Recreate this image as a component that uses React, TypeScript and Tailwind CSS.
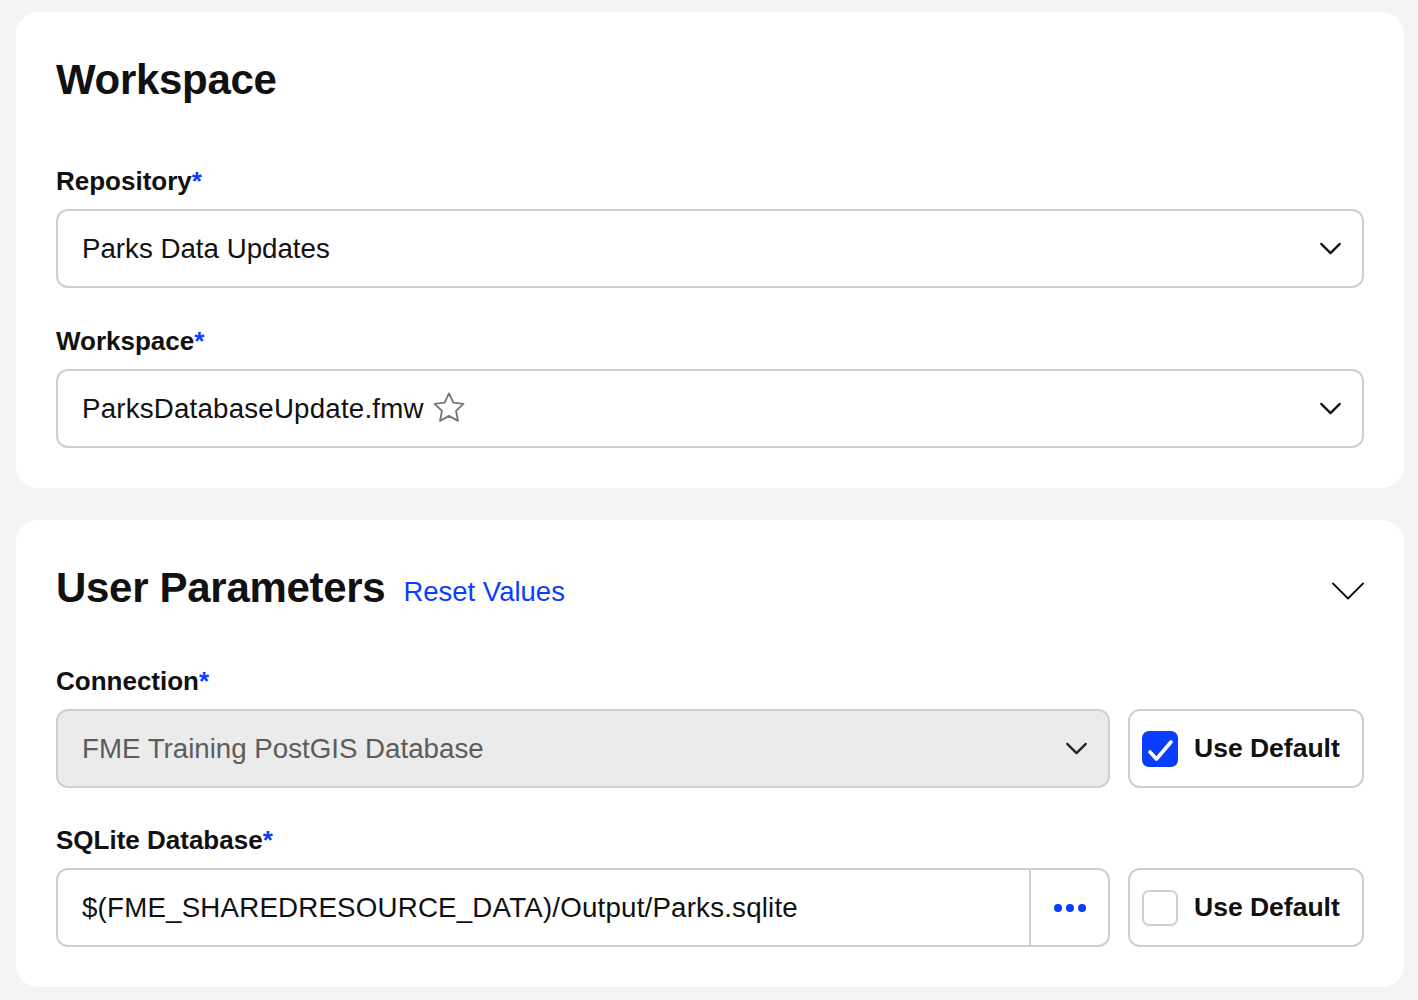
import React from "react";

const Chevron = ({ className = "" }: { className?: string }) => (
  <svg viewBox="0 0 24 14" className={className} fill="none" stroke="currentColor" strokeWidth={2.4} strokeLinecap="round" strokeLinejoin="round">
    <path d="M2 2l10 10L22 2" />
  </svg>
);

const Star = () => (
  <svg viewBox="0 0 24 24" className="h-[38px] w-[38px] text-[#777]" fill="none" stroke="currentColor" strokeWidth={1.2} strokeLinejoin="round">
    <path d="M12 2.8l2.75 5.8 6.35.8-4.65 4.4 1.2 6.3L12 17l-5.65 3.1 1.2-6.3L2.9 9.4l6.35-.8z" />
  </svg>
);

const Label = ({ children }: { children: React.ReactNode }) => (
  <div className="text-[26px] leading-8 font-bold text-[#111]">
    {children}
    <span className="text-[#0a3dff]">*</span>
  </div>
);

const SelectBox = ({
  children,
  disabled = false,
  className = "",
}: {
  children: React.ReactNode;
  disabled?: boolean;
  className?: string;
}) => (
  <div
    className={`flex h-[79px] items-center justify-between rounded-[12px] border-2 border-[#cfcfcf] pl-6 pr-5 ${
      disabled ? "bg-[#ebebeb] text-[#5c5c5c]" : "bg-white text-[#111]"
    } ${className}`}
  >
    <div className="flex items-center gap-[6px] text-[27.7px]">{children}</div>
    <Chevron className={`h-[13px] w-[23px] ${disabled ? "text-[#222]" : "text-[#111]"}`} />
  </div>
);

const UseDefault = ({ checked }: { checked: boolean }) => (
  <div className="flex h-[79px] w-[236px] shrink-0 items-center gap-4 rounded-[12px] border-2 border-[#cfcfcf] bg-white pl-3">
    {checked ? (
      <div className="flex h-9 w-9 items-center justify-center rounded-[7px] bg-[#0a3dff]">
        <svg viewBox="0 0 36 36" className="h-9 w-9" fill="none" stroke="white" strokeWidth={3.6} strokeLinecap="round" strokeLinejoin="round">
          <path d="M8 21l6.5 7L29 11" />
        </svg>
      </div>
    ) : (
      <div className="h-9 w-9 rounded-[7px] border-2 border-[#cfcfcf] bg-white" />
    )}
    <span className="text-[26.5px] font-bold text-[#111]">Use Default</span>
  </div>
);

export default function App() {
  return (
    <div className="min-h-screen bg-[#f4f4f4] pt-3 pb-3 pl-4 pr-[14px] font-['Liberation_Sans',Arial,sans-serif] text-[#111]">
      <div className="flex flex-col gap-8">
        {/* Workspace card */}
        <section className="rounded-[22px] bg-white px-10 pt-10 pb-10">
          <h1 className="text-[42px] leading-[56px] font-bold tracking-[-0.3px]">Workspace</h1>
          <div className="mt-[57px] flex flex-col gap-3">
            <Label>Repository</Label>
            <SelectBox>Parks Data Updates</SelectBox>
          </div>
          <div className="mt-[37px] flex flex-col gap-3">
            <Label>Workspace</Label>
            <SelectBox>
              <span className="tracking-[0.2px]">ParksDatabaseUpdate.fmw</span>
              <Star />
            </SelectBox>
          </div>
        </section>

        {/* User parameters card */}
        <section className="rounded-[22px] bg-white px-10 pt-10 pb-10">
          <div className="flex items-center justify-between">
            <div className="flex items-center gap-[18px]">
              <h2 className="text-[42px] leading-[56px] font-bold tracking-[-0.3px]">User Parameters</h2>
              <a href="#" className="mt-[7px] text-[27.5px] text-[#0a3dff]">Reset Values</a>
            </div>
            <svg viewBox="0 0 32 18" className="mt-[5px] h-[18px] w-[32px] text-[#111]" fill="none" stroke="currentColor" strokeWidth={1.8} strokeLinecap="round" strokeLinejoin="round">
              <path d="M1 1.5l15 15 15-15" />
            </svg>
          </div>
          <div className="mt-[49px] flex flex-col gap-3">
            <Label>Connection</Label>
            <div className="flex gap-[18px]">
              <SelectBox disabled className="flex-1">FME Training PostGIS Database</SelectBox>
              <UseDefault checked />
            </div>
          </div>
          <div className="mt-[36px] flex flex-col gap-3">
            <Label>SQLite Database</Label>
            <div className="flex gap-[18px]">
              <div className="flex h-[79px] flex-1 items-stretch overflow-hidden rounded-[12px] border-2 border-[#cfcfcf] bg-white">
                <div className="flex flex-1 items-center pl-6 text-[27.7px] tracking-[0.2px] text-[#111]">
                  $(FME_SHAREDRESOURCE_DATA)/Output/Parks.sqlite
                </div>
                <div className="flex w-[79px] items-center justify-center gap-[4px] border-l-2 border-[#cfcfcf]">
                  <span className="h-[8px] w-[8px] rounded-full bg-[#0a3dff]" />
                  <span className="h-[8px] w-[8px] rounded-full bg-[#0a3dff]" />
                  <span className="h-[8px] w-[8px] rounded-full bg-[#0a3dff]" />
                </div>
              </div>
              <UseDefault checked={false} />
            </div>
          </div>
        </section>
      </div>
    </div>
  );
}
